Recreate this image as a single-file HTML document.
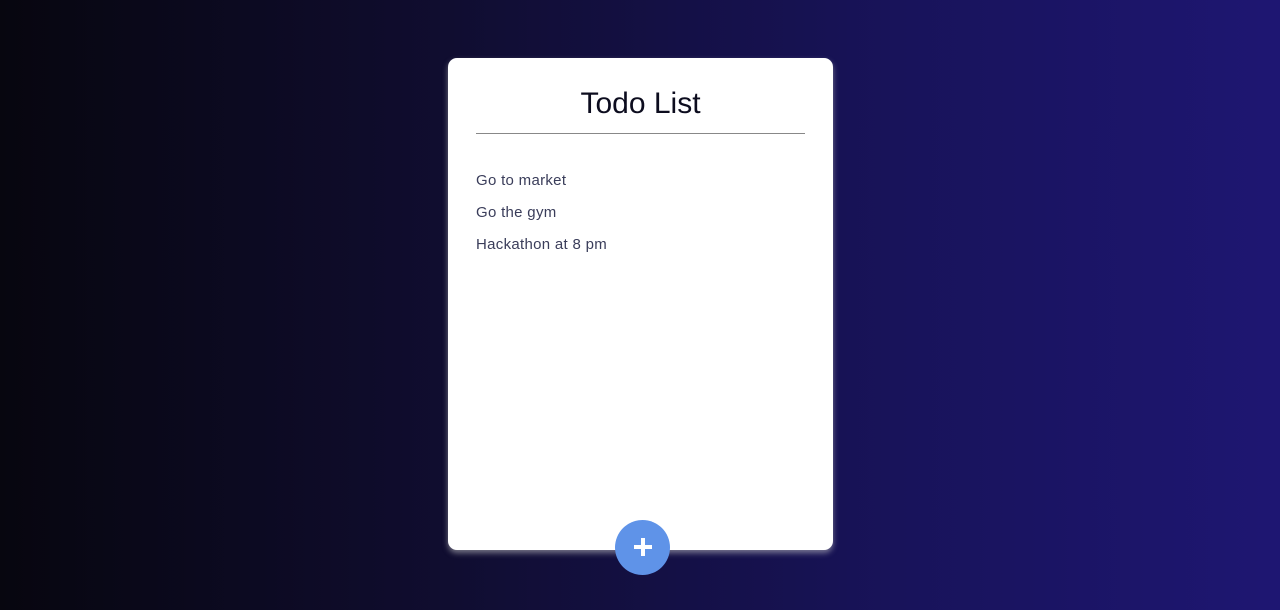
<!DOCTYPE html>
<html><head><meta charset="utf-8"><style>
html,body{margin:0;padding:0;width:1280px;height:610px;overflow:hidden}
body{background:linear-gradient(90deg,#07060f 0%,#100d30 35%,#18135a 70%,#1e1672 100%);font-family:"Liberation Sans",sans-serif;position:relative}
.card{position:absolute;left:448px;top:58px;width:385px;height:492px;background:#fff;border-radius:9px;box-shadow:0 3px 6px rgba(200,200,200,.55)}
h1{margin:0;position:absolute;left:0;right:0;text-align:center;font-weight:normal;font-size:30px;color:#0c0c1e}
.card h1{top:29px}
.line{position:absolute;left:28px;top:75px;width:329px;height:1px;background:#888}
.item{position:absolute;left:28px;font-size:15px;color:#3a3d5a;letter-spacing:.3px}
.btn{position:absolute;left:615px;top:520px;width:55px;height:55px;border-radius:50%;background:#5f93e8}
.btn:before{content:"";position:absolute;left:19px;top:25px;width:18px;height:4px;background:#fff}
.btn:after{content:"";position:absolute;left:26px;top:18px;width:4px;height:18px;background:#fff}
</style></head><body>
<div class="card">
<h1>Todo List</h1>
<div class="line"></div>
<div class="item" style="top:114px">Go to market</div>
<div class="item" style="top:146px">Go the gym</div>
<div class="item" style="top:178px">Hackathon at 8 pm</div>
</div>
<div class="btn"></div>
</body></html>
